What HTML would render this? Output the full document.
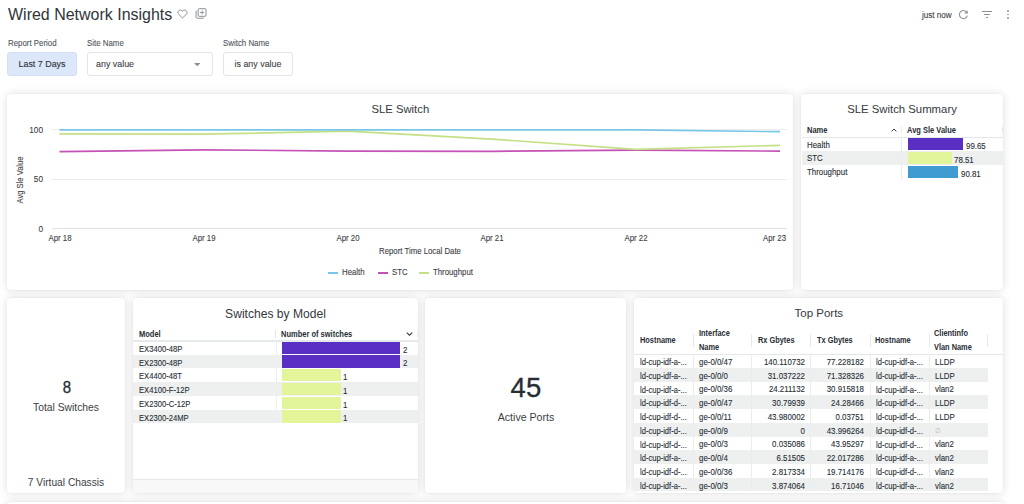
<!DOCTYPE html>
<html><head><meta charset="utf-8"><title>Wired Network Insights</title>
<style>
html,body{margin:0;padding:0;background:#fff;width:1024px;height:504px;overflow:hidden;position:relative;font-family:"Liberation Sans", sans-serif;}
.t{position:absolute;white-space:nowrap;-webkit-text-stroke:0.1px currentColor;}
.b{-webkit-text-stroke:0;}
.r{position:absolute;}
</style></head><body>
<div class="t" style="left:8.00px;top:5.62px;font-size:16.4px;line-height:16.4px;color:#30353a;-webkit-text-stroke:0;transform:scaleX(0.975);transform-origin:0 0;">Wired Network Insights</div>
<svg class="r" style="left:177px;top:8.6px" width="11" height="10" viewBox="0 0 11 10"><path d="M5.5 9 L1.7 5.3 C0.6 4.2 0.7 2.3 1.9 1.5 C3.1 0.7 4.6 1.1 5.5 2.3 C6.4 1.1 7.9 0.7 9.1 1.5 C10.3 2.3 10.4 4.2 9.3 5.3 Z" fill="none" stroke="#8a9096" stroke-width="1" stroke-linejoin="round"/></svg>
<svg class="r" style="left:195px;top:8px" width="12" height="11" viewBox="0 0 12 11"><rect x="3.2" y="0.7" width="7.8" height="7.6" rx="1" fill="none" stroke="#8a9096" stroke-width="1"/><path d="M1.1 2.6 V9.2 Q1.1 10.2 2.1 10.2 H8.8" fill="none" stroke="#8a9096" stroke-width="1"/><path d="M7.1 2.5 V6.5 M5.1 4.5 H9.1" stroke="#8a9096" stroke-width="0.9"/></svg>
<div class="t" style="left:921.70px;top:11.16px;font-size:8.91px;line-height:8.91px;color:#3c4043;transform:scaleX(0.9091);transform-origin:0 0;">just now</div>
<svg class="r" style="left:958px;top:9px" width="11" height="11" viewBox="0 0 11 11"><path d="M9.2 4.2 A4 4 0 1 0 9.3 6.6" fill="none" stroke="#8a9096" stroke-width="1.1"/><path d="M9.6 1.2 V4.6 H6.2 Z" fill="#8a9096"/></svg>
<div class="r" style="left:981.80px;top:10.60px;width:10.40px;height:1.10px;background:#8a9096;"></div>
<div class="r" style="left:983.80px;top:13.80px;width:6.40px;height:1.10px;background:#8a9096;"></div>
<div class="r" style="left:985.80px;top:16.80px;width:2.40px;height:1.10px;background:#8a9096;"></div>
<div class="r" style="left:1007.00px;top:10.30px;width:1.80px;height:1.70px;background:#8a9096;border-radius:1px;"></div>
<div class="r" style="left:1007.00px;top:13.60px;width:1.80px;height:1.70px;background:#8a9096;border-radius:1px;"></div>
<div class="r" style="left:1007.00px;top:16.90px;width:1.80px;height:1.70px;background:#8a9096;border-radius:1px;"></div>
<div class="t" style="left:7.60px;top:39.14px;font-size:8.69px;line-height:8.69px;color:#50555b;transform:scaleX(0.9091);transform-origin:0 0;">Report Period</div>
<div class="t" style="left:87.40px;top:39.14px;font-size:8.69px;line-height:8.69px;color:#50555b;transform:scaleX(0.9091);transform-origin:0 0;">Site Name</div>
<div class="t" style="left:223.20px;top:39.14px;font-size:8.69px;line-height:8.69px;color:#50555b;transform:scaleX(0.9091);transform-origin:0 0;">Switch Name</div>
<div class="r" style="left:7.30px;top:52.30px;width:69.30px;height:23.50px;background:#dce8fa;border:1px solid #d2e0f5;border-radius:3px;box-sizing:border-box;"></div>
<div class="t" style="left:-258.00px;width:600px;text-align:center;top:58.81px;font-size:9.79px;line-height:9.79px;color:#2b3035;transform:scaleX(0.9091);transform-origin:50% 0;">Last 7 Days</div>
<div class="r" style="left:87.40px;top:52.30px;width:125.30px;height:23.50px;background:#fff;border:1px solid #e2e4e7;border-radius:3px;box-sizing:border-box;"></div>
<div class="t" style="left:95.60px;top:58.81px;font-size:9.79px;line-height:9.79px;color:#3c4043;transform:scaleX(0.9091);transform-origin:0 0;">any value</div>
<svg class="r" style="left:193.5px;top:62.8px" width="6.5" height="3.3" viewBox="0 0 6.5 3.3"><path d="M0 0 H6.5 L3.25 3.3 Z" fill="#8a9096"/></svg>
<div class="r" style="left:223.20px;top:52.30px;width:69.80px;height:23.50px;background:#fff;border:1px solid #e2e4e7;border-radius:3px;box-sizing:border-box;"></div>
<div class="t" style="left:-42.30px;width:600px;text-align:center;top:58.81px;font-size:9.79px;line-height:9.79px;color:#3c4043;transform:scaleX(0.9091);transform-origin:50% 0;">is any value</div>
<div class="r" style="left:7.00px;top:94.00px;width:786.00px;height:196.00px;background:#fff;border-radius:4px;box-shadow:0 0 2px rgba(0,0,0,0.06),0 0 10px rgba(0,0,0,0.13);"></div>
<div class="r" style="left:801.00px;top:94.00px;width:202.00px;height:196.00px;background:#fff;border-radius:4px;box-shadow:0 0 2px rgba(0,0,0,0.06),0 0 10px rgba(0,0,0,0.13);"></div>
<div class="r" style="left:7.00px;top:298.00px;width:118.00px;height:195.00px;background:#fff;border-radius:4px;box-shadow:0 0 2px rgba(0,0,0,0.06),0 0 10px rgba(0,0,0,0.13);"></div>
<div class="r" style="left:133.00px;top:298.00px;width:285.00px;height:195.00px;background:#fff;border-radius:4px;box-shadow:0 0 2px rgba(0,0,0,0.06),0 0 10px rgba(0,0,0,0.13);"></div>
<div class="r" style="left:425.00px;top:298.00px;width:201.00px;height:195.00px;background:#fff;border-radius:4px;box-shadow:0 0 2px rgba(0,0,0,0.06),0 0 10px rgba(0,0,0,0.13);"></div>
<div class="r" style="left:634.00px;top:298.00px;width:369.00px;height:195.00px;background:#fff;border-radius:4px;box-shadow:0 0 2px rgba(0,0,0,0.06),0 0 10px rgba(0,0,0,0.13);"></div>
<div class="r" style="left:7.00px;top:501.50px;width:996.00px;height:138.50px;background:#fff;border-radius:4px;box-shadow:0 0 2px rgba(0,0,0,0.06),0 0 10px rgba(0,0,0,0.13);"></div>
<div class="t" style="left:100.30px;width:600px;text-align:center;top:104.33px;font-size:11.3px;line-height:11.3px;color:#34383d;-webkit-text-stroke:0;">SLE Switch</div>
<div class="t" style="left:-556.80px;width:600px;text-align:right;top:125.77px;font-size:9.13px;line-height:9.13px;color:#3c4043;transform:scaleX(0.9091);transform-origin:100% 0;">100</div>
<div class="t" style="left:-556.80px;width:600px;text-align:right;top:175.17px;font-size:9.13px;line-height:9.13px;color:#3c4043;transform:scaleX(0.9091);transform-origin:100% 0;">50</div>
<div class="t" style="left:-556.80px;width:600px;text-align:right;top:224.62px;font-size:9.13px;line-height:9.13px;color:#3c4043;transform:scaleX(0.9091);transform-origin:100% 0;">0</div>
<div class="r" style="left:52.00px;top:129.40px;width:734.70px;height:1.00px;background:#ececec;"></div>
<div class="r" style="left:52.00px;top:178.80px;width:734.70px;height:1.00px;background:#ececec;"></div>
<div class="r" style="left:52.00px;top:228.20px;width:734.70px;height:1.10px;background:#dfe3ec;"></div>
<div class="t" style="left:-29.70px;top:174.60px;width:100px;height:10px;line-height:10px;font-size:8.36px;color:#3c4043;text-align:center;transform:rotate(-90deg) scaleX(0.909);">Avg Sle Value</div>
<div class="t" style="left:-240.50px;width:600px;text-align:center;top:234.34px;font-size:8.58px;line-height:8.58px;color:#3c4043;transform:scaleX(0.9091);transform-origin:50% 0;">Apr 18</div>
<div class="t" style="left:-96.40px;width:600px;text-align:center;top:234.34px;font-size:8.58px;line-height:8.58px;color:#3c4043;transform:scaleX(0.9091);transform-origin:50% 0;">Apr 19</div>
<div class="t" style="left:47.70px;width:600px;text-align:center;top:234.34px;font-size:8.58px;line-height:8.58px;color:#3c4043;transform:scaleX(0.9091);transform-origin:50% 0;">Apr 20</div>
<div class="t" style="left:191.80px;width:600px;text-align:center;top:234.34px;font-size:8.58px;line-height:8.58px;color:#3c4043;transform:scaleX(0.9091);transform-origin:50% 0;">Apr 21</div>
<div class="t" style="left:335.90px;width:600px;text-align:center;top:234.34px;font-size:8.58px;line-height:8.58px;color:#3c4043;transform:scaleX(0.9091);transform-origin:50% 0;">Apr 22</div>
<div class="t" style="left:186.20px;width:600px;text-align:right;top:234.34px;font-size:8.58px;line-height:8.58px;color:#3c4043;transform:scaleX(0.9091);transform-origin:100% 0;">Apr 23</div>
<div class="t" style="left:119.70px;width:600px;text-align:center;top:247.24px;font-size:8.58px;line-height:8.58px;color:#3c4043;transform:scaleX(0.9091);transform-origin:50% 0;">Report Time Local Date</div>
<svg class="r" style="left:0;top:0" width="1024" height="504"><polyline points="59.5,151.6 203.6,149.8 347.7,151.1 491.8,151.3 635.9,150.2 780.0,151.1" fill="none" stroke="#c552b6" stroke-width="1.7" stroke-linejoin="round" stroke-linecap="butt"/><polyline points="59.5,133.9 203.6,134.2 347.7,131.2 491.8,139.1 635.9,149.4 780.0,145.3" fill="none" stroke="#c4e085" stroke-width="1.7" stroke-linejoin="round" stroke-linecap="butt"/><polyline points="59.5,129.9 203.6,129.9 347.7,129.9 491.8,129.9 635.9,129.9 780.0,131.7" fill="none" stroke="#78c6e8" stroke-width="1.7" stroke-linejoin="round" stroke-linecap="butt"/></svg>
<div class="r" style="left:327.80px;top:272.00px;width:10.70px;height:2.00px;background:#78c6e8;"></div>
<div class="t" style="left:341.80px;top:268.24px;font-size:8.58px;line-height:8.58px;color:#3c4043;transform:scaleX(0.9091);transform-origin:0 0;">Health</div>
<div class="r" style="left:377.70px;top:272.00px;width:10.60px;height:2.00px;background:#c552b6;"></div>
<div class="t" style="left:391.60px;top:268.24px;font-size:8.58px;line-height:8.58px;color:#3c4043;transform:scaleX(0.9091);transform-origin:0 0;">STC</div>
<div class="r" style="left:419.20px;top:272.00px;width:10.00px;height:2.00px;background:#c4e085;"></div>
<div class="t" style="left:432.50px;top:268.24px;font-size:8.58px;line-height:8.58px;color:#3c4043;transform:scaleX(0.9091);transform-origin:0 0;">Throughput</div>
<div class="t" style="left:602.00px;width:600px;text-align:center;top:104.29px;font-size:11.35px;line-height:11.35px;color:#34383d;-webkit-text-stroke:0;">SLE Switch Summary</div>
<div class="t b" style="left:807.20px;top:127.12px;font-size:8.25px;line-height:8.25px;color:#262d33;font-weight:700;transform:scaleX(0.9091);transform-origin:0 0;">Name</div>
<svg class="r" style="left:890.5px;top:127.5px" width="6" height="4" viewBox="0 0 6 4"><path d="M0.6 3.4 L3 1 L5.4 3.4" fill="none" stroke="#3c4043" stroke-width="1"/></svg>
<div class="r" style="left:901.20px;top:126.80px;width:0.80px;height:6.40px;background:#e6e8eb;"></div>
<div class="t b" style="left:907.30px;top:127.12px;font-size:8.25px;line-height:8.25px;color:#262d33;font-weight:700;transform:scaleX(0.9091);transform-origin:0 0;">Avg Sle Value</div>
<div class="r" style="left:1001.50px;top:126.80px;width:0.80px;height:6.40px;background:#e6e8eb;"></div>
<div class="r" style="left:801.50px;top:136.50px;width:201.50px;height:1.00px;background:#e4e7ea;"></div>
<div class="t" style="left:807.40px;top:140.74px;font-size:8.69px;line-height:8.69px;color:#262d33;transform:scaleX(0.9091);transform-origin:0 0;">Health</div>
<div class="r" style="left:907.70px;top:138.20px;width:55.80px;height:12.00px;background:#5a2fc3;"></div>
<div class="t" style="left:965.70px;top:142.14px;font-size:8.69px;line-height:8.69px;color:#262d33;transform:scaleX(0.9091);transform-origin:0 0;">99.65</div>
<div class="r" style="left:801.50px;top:151.20px;width:201.50px;height:13.70px;background:#eef0f0;"></div>
<div class="t" style="left:807.40px;top:154.44px;font-size:8.69px;line-height:8.69px;color:#262d33;transform:scaleX(0.9091);transform-origin:0 0;">STC</div>
<div class="r" style="left:907.70px;top:151.90px;width:44.10px;height:12.00px;background:#e3f59b;"></div>
<div class="t" style="left:954.00px;top:155.84px;font-size:8.69px;line-height:8.69px;color:#262d33;transform:scaleX(0.9091);transform-origin:0 0;">78.51</div>
<div class="t" style="left:807.40px;top:168.14px;font-size:8.69px;line-height:8.69px;color:#262d33;transform:scaleX(0.9091);transform-origin:0 0;">Throughput</div>
<div class="r" style="left:907.70px;top:165.60px;width:50.80px;height:12.00px;background:#3f9bd0;"></div>
<div class="t" style="left:960.70px;top:169.54px;font-size:8.69px;line-height:8.69px;color:#262d33;transform:scaleX(0.9091);transform-origin:0 0;">90.81</div>
<div class="r" style="left:901.20px;top:137.50px;width:0.80px;height:41.10px;background:#eaecee;"></div>
<div class="t" style="left:-233.10px;width:600px;text-align:center;top:379.31px;font-size:17px;line-height:17px;color:#262d33;-webkit-text-stroke:0.3px #262d33;transform:scaleX(0.88);transform-origin:50% 0;">8</div>
<div class="t" style="left:-233.65px;width:600px;text-align:center;top:402.41px;font-size:11.33px;line-height:11.33px;color:#3c4043;-webkit-text-stroke:0;transform:scaleX(0.9091);transform-origin:50% 0;">Total Switches</div>
<div class="t" style="left:-233.65px;width:600px;text-align:center;top:477.30px;font-size:11.22px;line-height:11.22px;color:#3c4043;-webkit-text-stroke:0;transform:scaleX(0.9091);transform-origin:50% 0;">7 Virtual Chassis</div>
<div class="t" style="left:-24.50px;width:600px;text-align:center;top:307.76px;font-size:12.1px;line-height:12.1px;color:#34383d;-webkit-text-stroke:0;">Switches by Model</div>
<div class="t b" style="left:138.60px;top:330.62px;font-size:8.25px;line-height:8.25px;color:#262d33;font-weight:700;transform:scaleX(0.9091);transform-origin:0 0;">Model</div>
<div class="r" style="left:275.00px;top:330.00px;width:1.00px;height:7.50px;background:#e3e6e9;"></div>
<div class="t b" style="left:281.00px;top:330.62px;font-size:8.25px;line-height:8.25px;color:#262d33;font-weight:700;transform:scaleX(0.9091);transform-origin:0 0;">Number of switches</div>
<svg class="r" style="left:406px;top:332px" width="7" height="4" viewBox="0 0 7 4"><path d="M0.7 0.6 L3.5 3.2 L6.3 0.6" fill="none" stroke="#3c4043" stroke-width="1.1"/></svg>
<div class="r" style="left:416.50px;top:330.50px;width:1.00px;height:6.50px;background:#eceef0;"></div>
<div class="r" style="left:133.00px;top:340.20px;width:285.00px;height:1.60px;background:#e6e9eb;"></div>
<div class="t" style="left:138.60px;top:344.77px;font-size:8.42px;line-height:8.42px;color:#262d33;transform:scaleX(0.9091);transform-origin:0 0;">EX3400-48P</div>
<div class="r" style="left:281.50px;top:341.70px;width:118.80px;height:12.20px;background:#5a2fc3;"></div>
<div class="t" style="left:402.60px;top:345.64px;font-size:8.69px;line-height:8.69px;color:#262d33;transform:scaleX(0.9091);transform-origin:0 0;">2</div>
<div class="r" style="left:133.00px;top:354.65px;width:285.00px;height:13.75px;background:#eef0f0;"></div>
<div class="t" style="left:138.60px;top:358.52px;font-size:8.42px;line-height:8.42px;color:#262d33;transform:scaleX(0.9091);transform-origin:0 0;">EX2300-48P</div>
<div class="r" style="left:281.50px;top:355.45px;width:118.80px;height:12.20px;background:#5a2fc3;"></div>
<div class="t" style="left:402.60px;top:359.39px;font-size:8.69px;line-height:8.69px;color:#262d33;transform:scaleX(0.9091);transform-origin:0 0;">2</div>
<div class="t" style="left:138.60px;top:372.27px;font-size:8.42px;line-height:8.42px;color:#262d33;transform:scaleX(0.9091);transform-origin:0 0;">EX4400-48T</div>
<div class="r" style="left:281.50px;top:369.20px;width:59.60px;height:12.20px;background:#e3f59b;"></div>
<div class="t" style="left:343.40px;top:373.14px;font-size:8.69px;line-height:8.69px;color:#262d33;transform:scaleX(0.9091);transform-origin:0 0;">1</div>
<div class="r" style="left:133.00px;top:382.15px;width:285.00px;height:13.75px;background:#eef0f0;"></div>
<div class="t" style="left:138.60px;top:386.02px;font-size:8.42px;line-height:8.42px;color:#262d33;transform:scaleX(0.9091);transform-origin:0 0;">EX4100-F-12P</div>
<div class="r" style="left:281.50px;top:382.95px;width:59.60px;height:12.20px;background:#e3f59b;"></div>
<div class="t" style="left:343.40px;top:386.89px;font-size:8.69px;line-height:8.69px;color:#262d33;transform:scaleX(0.9091);transform-origin:0 0;">1</div>
<div class="t" style="left:138.60px;top:399.77px;font-size:8.42px;line-height:8.42px;color:#262d33;transform:scaleX(0.9091);transform-origin:0 0;">EX2300-C-12P</div>
<div class="r" style="left:281.50px;top:396.70px;width:59.60px;height:12.20px;background:#e3f59b;"></div>
<div class="t" style="left:343.40px;top:400.64px;font-size:8.69px;line-height:8.69px;color:#262d33;transform:scaleX(0.9091);transform-origin:0 0;">1</div>
<div class="r" style="left:133.00px;top:409.65px;width:285.00px;height:13.75px;background:#eef0f0;"></div>
<div class="t" style="left:138.60px;top:413.52px;font-size:8.42px;line-height:8.42px;color:#262d33;transform:scaleX(0.9091);transform-origin:0 0;">EX2300-24MP</div>
<div class="r" style="left:281.50px;top:410.45px;width:59.60px;height:12.20px;background:#e3f59b;"></div>
<div class="t" style="left:343.40px;top:414.39px;font-size:8.69px;line-height:8.69px;color:#262d33;transform:scaleX(0.9091);transform-origin:0 0;">1</div>
<div class="r" style="left:275.50px;top:340.90px;width:0.80px;height:82.50px;background:#eceef0;"></div>
<div class="r" style="left:133.00px;top:479.30px;width:285.00px;height:1.00px;background:#e8e8e8;"></div>
<div class="r" style="left:133.00px;top:480.30px;width:285.00px;height:12.70px;background:#f8f8f8;border-radius:0 0 4px 4px;"></div>
<div class="t" style="left:225.90px;width:600px;text-align:center;top:373.92px;font-size:27.5px;line-height:27.5px;color:#262d33;-webkit-text-stroke:0.3px #262d33;">45</div>
<div class="t" style="left:226.10px;width:600px;text-align:center;top:411.23px;font-size:11.66px;line-height:11.66px;color:#3c4043;-webkit-text-stroke:0;transform:scaleX(0.9091);transform-origin:50% 0;">Active Ports</div>
<div class="t" style="left:518.80px;width:600px;text-align:center;top:308.47px;font-size:11.5px;line-height:11.5px;color:#34383d;-webkit-text-stroke:0;">Top Ports</div>
<div class="t b" style="left:640.10px;top:336.81px;font-size:8.14px;line-height:8.14px;color:#262d33;font-weight:700;transform:scaleX(0.9091);transform-origin:0 0;">Hostname</div>
<div class="t b" style="left:698.90px;top:329.81px;font-size:8.14px;line-height:8.14px;color:#262d33;font-weight:700;transform:scaleX(0.9091);transform-origin:0 0;">Interface</div>
<div class="t b" style="left:698.90px;top:343.81px;font-size:8.14px;line-height:8.14px;color:#262d33;font-weight:700;transform:scaleX(0.9091);transform-origin:0 0;">Name</div>
<div class="t b" style="left:757.90px;top:336.81px;font-size:8.14px;line-height:8.14px;color:#262d33;font-weight:700;transform:scaleX(0.9091);transform-origin:0 0;">Rx Gbytes</div>
<div class="t b" style="left:817.00px;top:336.81px;font-size:8.14px;line-height:8.14px;color:#262d33;font-weight:700;transform:scaleX(0.9091);transform-origin:0 0;">Tx Gbytes</div>
<div class="t b" style="left:875.30px;top:336.81px;font-size:8.14px;line-height:8.14px;color:#262d33;font-weight:700;transform:scaleX(0.9091);transform-origin:0 0;">Hostname</div>
<div class="t b" style="left:934.10px;top:329.81px;font-size:8.14px;line-height:8.14px;color:#262d33;font-weight:700;transform:scaleX(0.9091);transform-origin:0 0;">Clientinfo</div>
<div class="t b" style="left:934.10px;top:343.81px;font-size:8.14px;line-height:8.14px;color:#262d33;font-weight:700;transform:scaleX(0.9091);transform-origin:0 0;">Vlan Name</div>
<div class="r" style="left:693.00px;top:334.20px;width:0.80px;height:13.00px;background:#e6e8eb;"></div>
<div class="r" style="left:750.90px;top:334.20px;width:0.80px;height:13.00px;background:#e6e8eb;"></div>
<div class="r" style="left:809.80px;top:334.20px;width:0.80px;height:13.00px;background:#e6e8eb;"></div>
<div class="r" style="left:869.80px;top:334.20px;width:0.80px;height:13.00px;background:#e6e8eb;"></div>
<div class="r" style="left:928.50px;top:334.20px;width:0.80px;height:13.00px;background:#e6e8eb;"></div>
<div class="r" style="left:987.10px;top:334.20px;width:0.80px;height:13.00px;background:#e6e8eb;"></div>
<div class="r" style="left:634.00px;top:353.80px;width:369.00px;height:1.00px;background:#e4e7ea;"></div>
<div class="t" style="left:640.30px;top:358.32px;font-size:8.36px;line-height:8.36px;color:#262d33;transform:scaleX(0.9091);transform-origin:0 0;">ld-cup-idf-a-...</div>
<div class="t" style="left:699.30px;top:358.04px;font-size:8.69px;line-height:8.69px;color:#262d33;transform:scaleX(0.9091);transform-origin:0 0;">ge-0/0/47</div>
<div class="t" style="left:205.20px;width:600px;text-align:right;top:358.04px;font-size:8.69px;line-height:8.69px;color:#262d33;transform:scaleX(0.9091);transform-origin:100% 0;">140.110732</div>
<div class="t" style="left:264.20px;width:600px;text-align:right;top:358.04px;font-size:8.69px;line-height:8.69px;color:#262d33;transform:scaleX(0.9091);transform-origin:100% 0;">77.228182</div>
<div class="t" style="left:875.75px;top:358.32px;font-size:8.36px;line-height:8.36px;color:#262d33;transform:scaleX(0.9091);transform-origin:0 0;">ld-cup-idf-a-...</div>
<div class="t" style="left:934.70px;top:358.04px;font-size:8.69px;line-height:8.69px;color:#262d33;transform:scaleX(0.9091);transform-origin:0 0;">LLDP</div>
<div class="r" style="left:634.00px;top:368.02px;width:353.50px;height:13.72px;background:#eef0f0;"></div>
<div class="t" style="left:640.30px;top:372.04px;font-size:8.36px;line-height:8.36px;color:#262d33;transform:scaleX(0.9091);transform-origin:0 0;">ld-cup-idf-a-...</div>
<div class="t" style="left:699.30px;top:371.76px;font-size:8.69px;line-height:8.69px;color:#262d33;transform:scaleX(0.9091);transform-origin:0 0;">ge-0/0/0</div>
<div class="t" style="left:205.20px;width:600px;text-align:right;top:371.76px;font-size:8.69px;line-height:8.69px;color:#262d33;transform:scaleX(0.9091);transform-origin:100% 0;">31.037222</div>
<div class="t" style="left:264.20px;width:600px;text-align:right;top:371.76px;font-size:8.69px;line-height:8.69px;color:#262d33;transform:scaleX(0.9091);transform-origin:100% 0;">71.328326</div>
<div class="t" style="left:875.75px;top:372.04px;font-size:8.36px;line-height:8.36px;color:#262d33;transform:scaleX(0.9091);transform-origin:0 0;">ld-cup-idf-a-...</div>
<div class="t" style="left:934.70px;top:371.76px;font-size:8.69px;line-height:8.69px;color:#262d33;transform:scaleX(0.9091);transform-origin:0 0;">LLDP</div>
<div class="t" style="left:640.30px;top:385.76px;font-size:8.36px;line-height:8.36px;color:#262d33;transform:scaleX(0.9091);transform-origin:0 0;">ld-cup-idf-a-...</div>
<div class="t" style="left:699.30px;top:385.48px;font-size:8.69px;line-height:8.69px;color:#262d33;transform:scaleX(0.9091);transform-origin:0 0;">ge-0/0/36</div>
<div class="t" style="left:205.20px;width:600px;text-align:right;top:385.48px;font-size:8.69px;line-height:8.69px;color:#262d33;transform:scaleX(0.9091);transform-origin:100% 0;">24.211132</div>
<div class="t" style="left:264.20px;width:600px;text-align:right;top:385.48px;font-size:8.69px;line-height:8.69px;color:#262d33;transform:scaleX(0.9091);transform-origin:100% 0;">30.915818</div>
<div class="t" style="left:875.75px;top:385.76px;font-size:8.36px;line-height:8.36px;color:#262d33;transform:scaleX(0.9091);transform-origin:0 0;">ld-cup-idf-a-...</div>
<div class="t" style="left:934.70px;top:385.48px;font-size:8.69px;line-height:8.69px;color:#262d33;transform:scaleX(0.9091);transform-origin:0 0;">vlan2</div>
<div class="r" style="left:634.00px;top:395.46px;width:353.50px;height:13.72px;background:#eef0f0;"></div>
<div class="t" style="left:640.30px;top:399.48px;font-size:8.36px;line-height:8.36px;color:#262d33;transform:scaleX(0.9091);transform-origin:0 0;">ld-cup-idf-d-...</div>
<div class="t" style="left:699.30px;top:399.20px;font-size:8.69px;line-height:8.69px;color:#262d33;transform:scaleX(0.9091);transform-origin:0 0;">ge-0/0/47</div>
<div class="t" style="left:205.20px;width:600px;text-align:right;top:399.20px;font-size:8.69px;line-height:8.69px;color:#262d33;transform:scaleX(0.9091);transform-origin:100% 0;">30.79939</div>
<div class="t" style="left:264.20px;width:600px;text-align:right;top:399.20px;font-size:8.69px;line-height:8.69px;color:#262d33;transform:scaleX(0.9091);transform-origin:100% 0;">24.28466</div>
<div class="t" style="left:875.75px;top:399.48px;font-size:8.36px;line-height:8.36px;color:#262d33;transform:scaleX(0.9091);transform-origin:0 0;">ld-cup-idf-d-...</div>
<div class="t" style="left:934.70px;top:399.20px;font-size:8.69px;line-height:8.69px;color:#262d33;transform:scaleX(0.9091);transform-origin:0 0;">LLDP</div>
<div class="t" style="left:640.30px;top:413.20px;font-size:8.36px;line-height:8.36px;color:#262d33;transform:scaleX(0.9091);transform-origin:0 0;">ld-cup-idf-d-...</div>
<div class="t" style="left:699.30px;top:412.92px;font-size:8.69px;line-height:8.69px;color:#262d33;transform:scaleX(0.9091);transform-origin:0 0;">ge-0/0/11</div>
<div class="t" style="left:205.20px;width:600px;text-align:right;top:412.92px;font-size:8.69px;line-height:8.69px;color:#262d33;transform:scaleX(0.9091);transform-origin:100% 0;">43.980002</div>
<div class="t" style="left:264.20px;width:600px;text-align:right;top:412.92px;font-size:8.69px;line-height:8.69px;color:#262d33;transform:scaleX(0.9091);transform-origin:100% 0;">0.03751</div>
<div class="t" style="left:875.75px;top:413.20px;font-size:8.36px;line-height:8.36px;color:#262d33;transform:scaleX(0.9091);transform-origin:0 0;">ld-cup-idf-d-...</div>
<div class="t" style="left:934.70px;top:412.92px;font-size:8.69px;line-height:8.69px;color:#262d33;transform:scaleX(0.9091);transform-origin:0 0;">LLDP</div>
<div class="r" style="left:634.00px;top:422.90px;width:353.50px;height:13.72px;background:#eef0f0;"></div>
<div class="t" style="left:640.30px;top:426.92px;font-size:8.36px;line-height:8.36px;color:#262d33;transform:scaleX(0.9091);transform-origin:0 0;">ld-cup-idf-d-...</div>
<div class="t" style="left:699.30px;top:426.64px;font-size:8.69px;line-height:8.69px;color:#262d33;transform:scaleX(0.9091);transform-origin:0 0;">ge-0/0/9</div>
<div class="t" style="left:205.20px;width:600px;text-align:right;top:426.64px;font-size:8.69px;line-height:8.69px;color:#262d33;transform:scaleX(0.9091);transform-origin:100% 0;">0</div>
<div class="t" style="left:264.20px;width:600px;text-align:right;top:426.64px;font-size:8.69px;line-height:8.69px;color:#262d33;transform:scaleX(0.9091);transform-origin:100% 0;">43.996264</div>
<div class="t" style="left:875.75px;top:426.92px;font-size:8.36px;line-height:8.36px;color:#262d33;transform:scaleX(0.9091);transform-origin:0 0;">ld-cup-idf-d-...</div>
<div class="t" style="left:934.70px;top:427.95px;font-size:7.15px;line-height:7.15px;color:#c4c7ca;transform:scaleX(0.9091);transform-origin:0 0;">&#8709;</div>
<div class="t" style="left:640.30px;top:440.64px;font-size:8.36px;line-height:8.36px;color:#262d33;transform:scaleX(0.9091);transform-origin:0 0;">ld-cup-idf-d-...</div>
<div class="t" style="left:699.30px;top:440.36px;font-size:8.69px;line-height:8.69px;color:#262d33;transform:scaleX(0.9091);transform-origin:0 0;">ge-0/0/3</div>
<div class="t" style="left:205.20px;width:600px;text-align:right;top:440.36px;font-size:8.69px;line-height:8.69px;color:#262d33;transform:scaleX(0.9091);transform-origin:100% 0;">0.035086</div>
<div class="t" style="left:264.20px;width:600px;text-align:right;top:440.36px;font-size:8.69px;line-height:8.69px;color:#262d33;transform:scaleX(0.9091);transform-origin:100% 0;">43.95297</div>
<div class="t" style="left:875.75px;top:440.64px;font-size:8.36px;line-height:8.36px;color:#262d33;transform:scaleX(0.9091);transform-origin:0 0;">ld-cup-idf-d-...</div>
<div class="t" style="left:934.70px;top:440.36px;font-size:8.69px;line-height:8.69px;color:#262d33;transform:scaleX(0.9091);transform-origin:0 0;">vlan2</div>
<div class="r" style="left:634.00px;top:450.34px;width:353.50px;height:13.72px;background:#eef0f0;"></div>
<div class="t" style="left:640.30px;top:454.36px;font-size:8.36px;line-height:8.36px;color:#262d33;transform:scaleX(0.9091);transform-origin:0 0;">ld-cup-idf-a-...</div>
<div class="t" style="left:699.30px;top:454.08px;font-size:8.69px;line-height:8.69px;color:#262d33;transform:scaleX(0.9091);transform-origin:0 0;">ge-0/0/4</div>
<div class="t" style="left:205.20px;width:600px;text-align:right;top:454.08px;font-size:8.69px;line-height:8.69px;color:#262d33;transform:scaleX(0.9091);transform-origin:100% 0;">6.51505</div>
<div class="t" style="left:264.20px;width:600px;text-align:right;top:454.08px;font-size:8.69px;line-height:8.69px;color:#262d33;transform:scaleX(0.9091);transform-origin:100% 0;">22.017286</div>
<div class="t" style="left:875.75px;top:454.36px;font-size:8.36px;line-height:8.36px;color:#262d33;transform:scaleX(0.9091);transform-origin:0 0;">ld-cup-idf-a-...</div>
<div class="t" style="left:934.70px;top:454.08px;font-size:8.69px;line-height:8.69px;color:#262d33;transform:scaleX(0.9091);transform-origin:0 0;">vlan2</div>
<div class="t" style="left:640.30px;top:468.08px;font-size:8.36px;line-height:8.36px;color:#262d33;transform:scaleX(0.9091);transform-origin:0 0;">ld-cup-idf-d-...</div>
<div class="t" style="left:699.30px;top:467.80px;font-size:8.69px;line-height:8.69px;color:#262d33;transform:scaleX(0.9091);transform-origin:0 0;">ge-0/0/36</div>
<div class="t" style="left:205.20px;width:600px;text-align:right;top:467.80px;font-size:8.69px;line-height:8.69px;color:#262d33;transform:scaleX(0.9091);transform-origin:100% 0;">2.817334</div>
<div class="t" style="left:264.20px;width:600px;text-align:right;top:467.80px;font-size:8.69px;line-height:8.69px;color:#262d33;transform:scaleX(0.9091);transform-origin:100% 0;">19.714176</div>
<div class="t" style="left:875.75px;top:468.08px;font-size:8.36px;line-height:8.36px;color:#262d33;transform:scaleX(0.9091);transform-origin:0 0;">ld-cup-idf-d-...</div>
<div class="t" style="left:934.70px;top:467.80px;font-size:8.69px;line-height:8.69px;color:#262d33;transform:scaleX(0.9091);transform-origin:0 0;">vlan2</div>
<div class="r" style="left:634.00px;top:477.78px;width:353.50px;height:13.72px;background:#eef0f0;"></div>
<div class="t" style="left:640.30px;top:481.80px;font-size:8.36px;line-height:8.36px;color:#262d33;transform:scaleX(0.9091);transform-origin:0 0;">ld-cup-idf-a-...</div>
<div class="t" style="left:699.30px;top:481.52px;font-size:8.69px;line-height:8.69px;color:#262d33;transform:scaleX(0.9091);transform-origin:0 0;">ge-0/0/3</div>
<div class="t" style="left:205.20px;width:600px;text-align:right;top:481.52px;font-size:8.69px;line-height:8.69px;color:#262d33;transform:scaleX(0.9091);transform-origin:100% 0;">3.874064</div>
<div class="t" style="left:264.20px;width:600px;text-align:right;top:481.52px;font-size:8.69px;line-height:8.69px;color:#262d33;transform:scaleX(0.9091);transform-origin:100% 0;">16.71046</div>
<div class="t" style="left:875.75px;top:481.80px;font-size:8.36px;line-height:8.36px;color:#262d33;transform:scaleX(0.9091);transform-origin:0 0;">ld-cup-idf-a-...</div>
<div class="t" style="left:934.70px;top:481.52px;font-size:8.69px;line-height:8.69px;color:#262d33;transform:scaleX(0.9091);transform-origin:0 0;">vlan2</div>
<div class="r" style="left:693.00px;top:354.30px;width:0.80px;height:137.20px;background:#eaecee;"></div>
<div class="r" style="left:750.90px;top:354.30px;width:0.80px;height:137.20px;background:#eaecee;"></div>
<div class="r" style="left:809.80px;top:354.30px;width:0.80px;height:137.20px;background:#eaecee;"></div>
<div class="r" style="left:869.80px;top:354.30px;width:0.80px;height:137.20px;background:#eaecee;"></div>
<div class="r" style="left:928.50px;top:354.30px;width:0.80px;height:137.20px;background:#eaecee;"></div>
</body></html>
